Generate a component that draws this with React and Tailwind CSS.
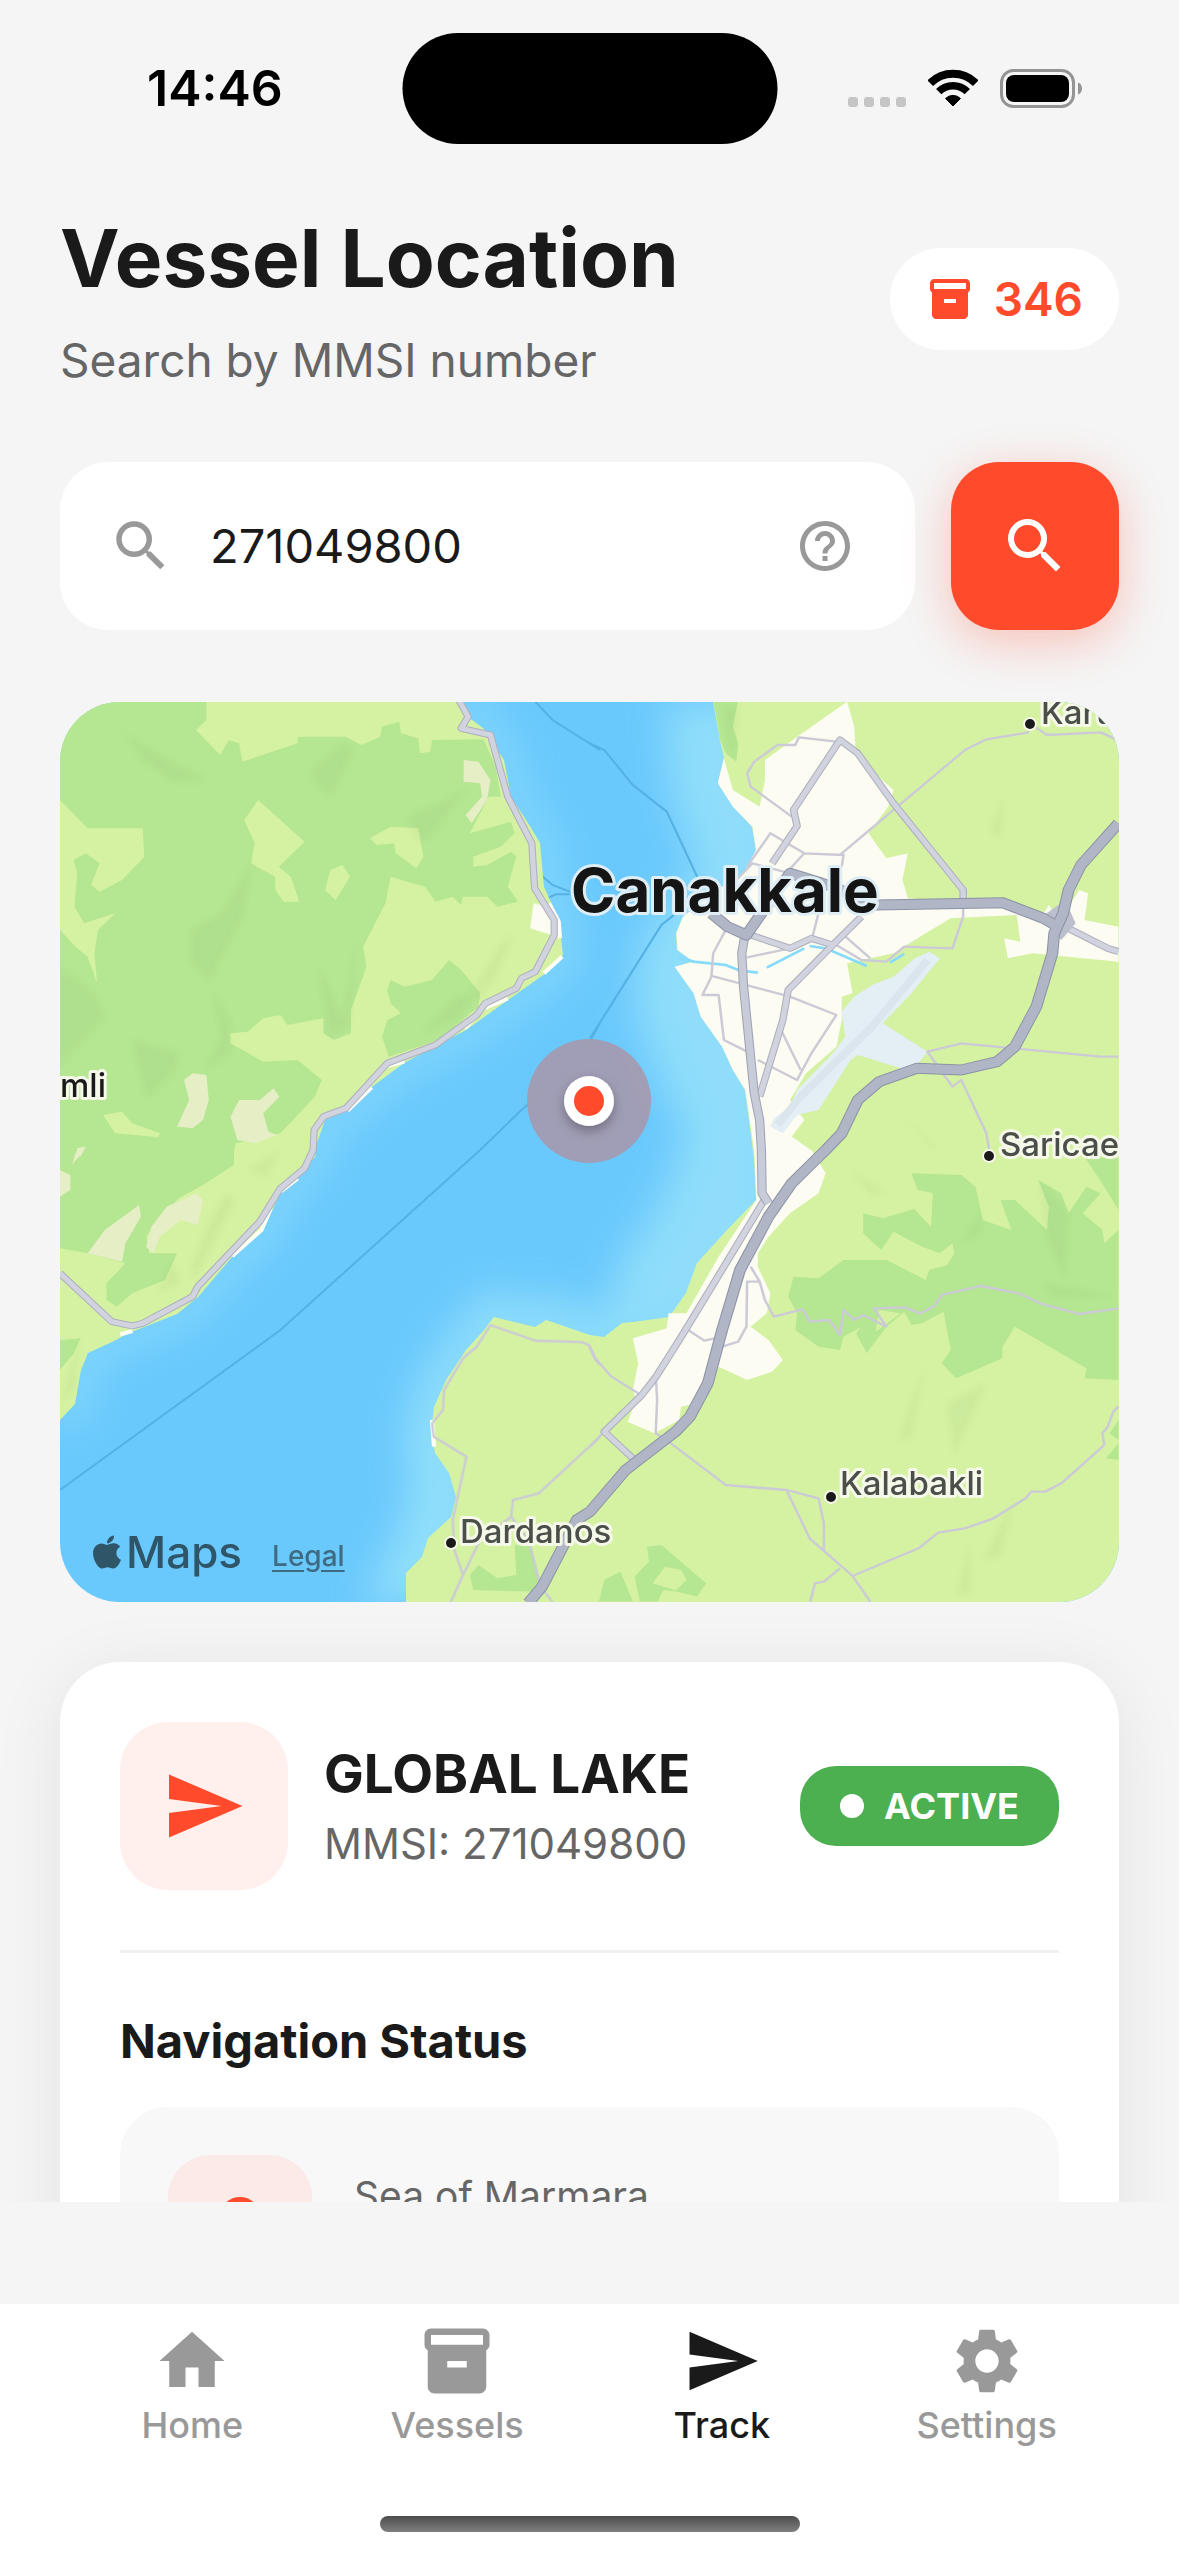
import React from "react";
import {
  MdSearch,
  MdHelpOutline,
  MdHome,
  MdInventory2,
  MdSend,
  MdSettings,
  MdLocationOn,
} from "react-icons/md";
import { FaApple } from "react-icons/fa";

const NW = "translate(0 -2) scale(.3444 .3333)";
const NE = "translate(530 -2) scale(.3571 .3333)";
const SW = "translate(0 448) scale(.3444 .3333)";
const SE = "translate(530 448) scale(.3571 .3333)";

const WEST_COAST =
  "M400 -10L408 15 423 26 444 58 451 95 468 121 480 141 484 185 496 211 501 236 503 253 486 271 448 298 406 328 344 361 313 384 289 407 265 418 257 441 255 455 220 492 203 528 172 555 138 595 117 612 69 631 52 640 28 651 21 668 15 702 0 718";
const EAST_COAST =
  "M653 0L660 38 664 56 658 81 673 104 692 125 696 148 684 172 662 185 623 215 616 231 617 248 634 259 615 265 634 291 641 314 662 344 673 368 685 388 689 418 694 458 696 498 667 528 637 561 626 591 609 615 573 620 562 621 544 635 530 633 486 618 475 625 434 615 424 628 406 648 386 678 374 705 371 731 375 751 389 771 396 795 391 815 368 836 362 855 346 871 346 900";

const places = [
  { name: "Kart", x: 981, y: 22, dot: [970, 22] },
  { name: "Saricae", x: 940, y: 454, dot: [929, 454] },
  { name: "Kalabakli", x: 780, y: 793, dot: [771, 795] },
  { name: "Dardanos", x: 400, y: 841, dot: [391, 841] },
];

function Roads({ width, casing, color, children }) {
  return (
    <>
      <g fill="none" stroke={casing} strokeWidth={width + 6} strokeLinejoin="round">
        {children}
      </g>
      <g fill="none" stroke={color} strokeWidth={width} strokeLinejoin="round">
        {children}
      </g>
    </>
  );
}

function MapArt() {
  return (
    <svg
      viewBox="0 0 1059 900"
      preserveAspectRatio="xMidYMid slice"
      className="block h-full w-full"
      role="img"
      aria-label="Map of Canakkale"
    >
      <defs>
        <filter id="shallow" x="-20%" y="-20%" width="140%" height="140%">
          <feGaussianBlur stdDeviation="18" />
        </filter>
        <filter id="relief" x="-20%" y="-20%" width="140%" height="140%">
          <feGaussianBlur stdDeviation="3" />
        </filter>
        <filter id="pin" x="-50%" y="-50%" width="200%" height="200%">
          <feDropShadow dx="0" dy="5" stdDeviation="6" floodColor="#000" floodOpacity=".3" />
        </filter>
      </defs>

      {/* Water */}
      <rect width="1059" height="900" fill="#6ac9fc" />
      <g filter="url(#shallow)" fill="none">
        <path d={WEST_COAST} stroke="#7fd5fd" strokeWidth="36" />
        <path d={EAST_COAST} stroke="#8cdcfb" strokeWidth="50" />
        <path
          d="M605 0L610 90 640 180 580 240 575 310 600 380 625 430 600 500 560 560 545 620 720 620 720 0z"
          fill="#8fddfb"
        />
        <path d="M380 690L345 730 350 790 330 850 300 900 400 900 400 690z" fill="#90defb" />
      </g>

      {/* Ferry routes */}
      <g fill="none" stroke="#55b1e3" strokeWidth="6">
        <path
          transform={NW}
          d="M1380 5L1430 60 1568 150M1390 520L1430 555 1480 575M1410 597L1440 583 1480 583M1568 970L1510 1075 1340 1230 1220 1350"
        />
        <path transform={SW} d="M1220 0L640 540 0 1020" />
        <path
          transform={NE}
          d="M0 130L40 150 120 255 215 335 300 530M235 645L200 675 0 1015"
        />
      </g>

      {/* Land */}
      <path d={WEST_COAST + "V0z"} fill="#d5f2a2" />
      <path d={EAST_COAST + "H1059V0z"} fill="#d5f2a2" />

      {/* Beaches */}
      <g fill="none" stroke="#fffef5" strokeWidth="12">
        <path
          transform={NW}
          d="M1420 610L1448 665 1452 715M1458 770L1405 820M1300 895L1230 925 1175 985M1000 1085L950 1098M905 1162L835 1232"
        />
        <path transform={SW} d="M690 85L640 125M612 175L585 240 500 318M210 543L175 553M1080 810L1086 890" />
      </g>

      {/* Woodland */}
      <g fill="#b5e692">
        <path
          transform={NW}
          d="M0 0L425 5V60L395 90 465 165 490 120 520 130 530 185 690 130V110H830L875 135 930 110 935 80 985 65 990 100 1040 115 1045 160 1075 155 1080 120 1230 118 1265 200 1280 290 1245 290 1190 400 1310 365 1320 400 1280 440 1200 470V500L1240 495 1310 455 1325 470 1300 560 1330 605 1270 620 1240 590H1170L1165 615 1140 590 1090 605 1060 560 960 530 945 610 880 740 890 800 845 930V1000L795 1020 765 1000V955L660 975 640 945 590 955 545 995 495 1000V1030L590 1085 690 1080 760 1140 740 1190 640 1300 510 1330 505 1352H0z"
        />
        <path
          transform={NW}
          d="M950 870L960 840 1000 860 1080 840 1130 780 1165 810 1220 880 1215 920 1100 1020 955 1070 935 1010 950 960 990 940 960 910z"
        />
        <path
          transform={SW}
          d="M0 0H505V45L415 105 345 145 300 190 250 260 260 310 340 310 305 390 210 430 165 470 135 450V400L190 340 80 310 0 295zM0 570L60 565 40 610 0 660zM1320 1185L1370 1190 1395 1300 1370 1325 1200 1320 1190 1275 1215 1245 1270 1285 1325 1275z"
        />
        <path transform={NE} d="M345 0H415L400 80 415 130 410 185 380 160 365 120z" />
        <path
          transform={SE}
          d="M900 70L1040 75 1080 110 1100 210 1180 240 1150 150 1190 150 1280 240 1285 170 1255 90 1320 130 1340 190 1390 110 1430 130 1380 190 1435 240 1440 280 1480 240V690L1385 685 1390 655 1190 530 1155 590V625L1025 685 985 640 1010 600 990 485 930 520 900 525 880 485 830 530 775 610 745 550 760 530 710 560 700 600 640 590 575 540 580 490 555 440 570 380 640 385 710 330H830L940 390 950 360 1000 345 1020 310 1015 280 980 310 930 290 850 245 815 300 765 250V190L820 205 915 175 955 230zM1385 20L1480 25V180L1440 110zM1480 810L1455 850 1480 870zM1445 925L1480 880V930z"
        />
        <path
          transform={SE}
          fillRule="evenodd"
          d="M160 1190L200 1185 325 1300 300 1340 240 1325 205 1320 190 1355H140L125 1280 165 1235zM210 1250L175 1300 240 1322 270 1290 255 1260zM25 1355L40 1290 85 1265 120 1355z"
        />
      </g>

      {/* Clearings */}
      <g fill="#d5f2a2">
        <path
          transform={NW}
          d="M0 300L80 385H240L245 470 180 540 115 575 90 555 115 490 75 460 40 480 50 520 42 620 70 670 160 640 110 690 100 760 108 850 80 770 45 740 0 690zM575 300L710 425 635 500 670 530 695 605 650 605 625 570V530L555 490 565 430 535 360zM820 495L842 530 800 600 770 570 785 510zM900 415L960 380 1040 385 1055 470 1035 505 975 460 970 430 920 435zM125 1245L180 1235 210 1270 290 1300 285 1312 160 1300z"
        />
        <path transform={SE} d="M960 130L920 120 910 180 955 230zM810 480L870 490 800 545z" />
      </g>
      <g fill="#e6eec6">
        <path
          transform={NW}
          d="M1172 180L1215 185 1250 240 1240 300 1195 370 1178 345 1225 290 1220 250 1172 245zM360 1140L385 1120 425 1125 432 1200 415 1260 385 1285 340 1280 375 1200zM495 1250L520 1200 580 1200 620 1165 637 1190 590 1240 605 1295 630 1305 570 1330 515 1320zM45 1370L50 1345 75 1340 60 1370z"
        />
        <path
          transform={SW}
          d="M230 165L235 200 190 280 180 335 80 310 130 240zM395 130L415 150 400 225 350 210 290 260 270 310 250 290 265 230 310 170zM0 60L30 75V120L0 140zM70 0L35 45 45 10z"
        />
      </g>

      {/* Relief shading */}
      <g filter="url(#relief)" fill="#6e9150" opacity=".07">
        <path
          transform={NW}
          d="M140 20L200 110 330 190 430 240 330 245 240 180zM730 210L820 130 850 150 790 290 740 250zM380 690L470 640 560 480 530 650 430 850 380 780zM750 790L820 960 860 720 840 980 780 1010zM1010 350L1120 300 1190 260 1080 400 1040 430zM440 870L495 960V1060L420 1110 470 1010zM0 800L100 880 130 950 0 1100zM210 1020L350 1060 330 1120 250 1200zM1200 870L1280 730 1320 700 1260 840 1210 900zM1050 1000L1150 890 1210 880 1150 960z"
        />
        <path
          transform={SW}
          d="M480 130L510 150 440 290 390 390 380 350 430 220zM0 760L60 560 40 720zM540 60L640 0 600 80zM280 430L330 330 350 400z"
        />
        <path
          transform={SE}
          d="M1260 90L1340 190 1330 390 1280 260zM1040 280L1100 180 1090 260zM1260 400L1480 440 1300 440zM860 880L940 640 900 860zM1000 760L1110 700 1020 920zM1100 1230L1190 1040 1150 1220zM730 60L830 130 780 130zM1030 1330L1060 1180 1070 1330z"
        />
        <path transform={NE} d="M1120 390L1160 290 1150 420zM870 1240L950 1320 980 1370zM370 20L415 20 400 180z" />
      </g>

      {/* Built-up areas */}
      <g fill="#fcfcf2">
        <path transform={NW} d="M1375 610L1420 620 1446 680 1450 712 1365 685z" />
        <path
          transform={NE}
          d="M720 5L740 80 745 170 850 270 835 320 780 400 830 475 890 460 875 540 890 595 1040 610 1150 600 1270 640 1285 615 1300 640 1340 620 1370 570 1395 580 1385 660 1480 680V785L1380 775 1240 760 1170 775 1160 715 1205 725 1195 645 1010 655 940 700 850 760 720 790 735 880 705 890V960L690 1040 605 1120 560 1200 600 1260 565 1310 620 1352 460 1352 447 1260 435 1170 400 1110 370 1040 310 950 290 880 237 800 290 785 245 750 242 700 260 650 370 560 430 520 465 450 455 380 400 320 358 250 375 175 400 270 475 320 490 240V180L580 110z"
        />
        <path
          transform={SE}
          d="M460 0L620 0 660 70 640 130 560 190 500 260 470 310V350L505 430 495 490 450 530 500 570 540 630 510 665 440 690 360 650 340 700 300 760 255 770 250 810 180 850 105 815 130 750 120 720 135 640 120 565 215 535 220 490H270L360 320 466 150z"
        />
      </g>

      {/* Airfield */}
      <g transform={NE}>
        <path
          fill="#e3eef5"
          d="M950 755L980 775 900 880 820 970 945 1055 920 1090 870 1105 750 1065 730 1080 670 1180 640 1230 580 1245 540 1300 505 1280 515 1255 560 1220 580 1170 680 1060 715 1010 705 935 740 890 790 855 850 830 910 775z"
        />
        <path d="M945 780L790 980 590 1190 525 1275" fill="none" stroke="#dae5ed" strokeWidth="22" />
      </g>

      {/* River */}
      <path
        transform={NE}
        fill="none"
        stroke="#86dbfb"
        strokeWidth="8"
        d="M245 772L290 785 380 795 420 812 470 818M495 803L600 745M615 738L660 745 775 798M840 788L880 762"
      />

      {/* Minor roads */}
      <g fill="none" stroke="#cbcad6" strokeWidth="7" strokeLinejoin="round">
        <path
          transform={NE}
          d="M565 350L450 260 440 220 460 185 525 135 575 135 585 112 690 125M700 465L850 330 1050 150 1110 118 1225 98 1233 80M1245 80L1280 105 1430 97 1468 115 1480 130M440 500L505 400 600 460 710 465 705 500M410 540L455 490 560 520M540 530L600 460M380 690L345 760 340 830 315 885 360 885 375 1020 440 1055M340 828L560 890 690 945 620 1060 580 1140 470 1080M535 990L590 1110M710 705L785 775M690 735L760 780 830 785 880 740 1015 745 1045 650V620M640 640L622 715M1480 1070L1430 1070 1040 1030 945 1055 1015 1160 1040 1140 1110 1300 1118 1350M440 772L560 745"
        />
        <path
          transform={SE}
          d="M40 845L0 890M0 590L15 625 60 680 135 730M185 690L188 750 184 850 220 875 380 1005 550 1020 640 1045 655 1120V1205M550 1020L615 1165 735 1278 785 1355M735 1278L920 1195 975 1148 1050 1135 1130 1105 1220 1045 1235 1025 1275 1025 1320 1000 1440 885 1435 850 1450 830 1465 785 1480 770M700 1255L655 1295 630 1300 617 1355M450 350L475 395 490 450 515 500 595 478 615 515 670 510 700 555 710 480 740 510 765 495 830 530 795 475 880 472 925 490 965 468 985 435 1095 408 1200 430 1260 460 1370 492 1480 475M475 395H440L438 530 415 575 370 590 350 565 320 572 275 540"
        />
        <path
          transform={SW}
          d="M1568 645L1552 625 1535 585 1515 576 1380 572 1250 525 1210 590 1170 625 1115 720 1112 780 1080 820 1085 860 1180 920 1140 1110 1145 1200 1170 1275 1220 1170 1310 1100 1315 1050 1390 1030 1568 860M1170 1275L1135 1355M1310 1100L1360 1170 1395 1310 1430 1355"
        />
      </g>

      {/* Secondary roads */}
      <Roads width={15} casing="#aeafbf" color="#d1d3df">
        <path
          transform={NW}
          d="M1158 0L1185 50 1165 85 1250 105 1300 290 1370 430 1378 565 1435 660V705L1380 815 1340 835 1325 865 1235 910 1210 945 1090 1035 950 1090 830 1225 765 1250 738 1290 735 1350 710 1405 640 1465 580 1565 400 1760 385 1790 240 1870 210 1878 150 1865 0 1720"
        />
        <path
          transform={NE}
          d="M510 490L580 378 570 330 700 120 750 160 850 310 1045 570V600M450 705L560 745 620 715 680 735 760 650M680 735L555 870 540 960 475 1190M1330 680L1450 745 1480 755"
        />
        <path transform={SE} d="M488 150L330 430 250 570 185 680 145 735 40 845 125 930" />
      </Roads>
      <Roads width={20} casing="#a2a4b6" color="#c8cbd8">
        <path transform={NE} d="M435 700L425 760 430 860 460 1180 475 1260 480 1350 482 1480 500 1510" />
      </Roads>

      {/* Highways */}
      <path transform={NE} d="M1260 655L1330 600 1360 670 1320 720z" fill="#bcc0cd" />
      <Roads width={27} casing="#8d93a8" color="#b0b6c5">
        <path transform={NE} d="M340 640L385 680 438 705 490 625 560 520 680 560 800 615 1155 608 1270 655 1310 680" />
        <path
          transform={NE}
          d="M1480 370L1375 495 1340 570 1325 640 1300 700 1295 760 1250 920 1190 1040 1140 1085 1040 1110 915 1105 810 1145 750 1200 705 1300 660 1350 565 1450 500 1550 420 1710 370 1890 330 2050 280 2150 240 2195 100 2310 0 2435 -37 2460 -134 2660 -173 2710"
        />
      </Roads>

      {/* Labels */}
      <g
        className="font-['Inter']"
        stroke="#f6f8ea"
        strokeLinejoin="round"
        strokeWidth="6"
        paintOrder="stroke"
      >
        {places.map((p) => (
          <g key={p.name}>
            <circle cx={p.dot[0]} cy={p.dot[1]} r="5" fill="#1a1a1a" strokeWidth="4" />
            <text x={p.x} y={p.y} fontSize="33" fontWeight="500" fill="#4b4f4a">
              {p.name}
            </text>
          </g>
        ))}
        <text x="46" y="395" textAnchor="end" fontSize="33" fontWeight="500" fill="#1a1a1a">
          mli
        </text>
        <text x="511" y="210" fontSize="60" fontWeight="700" fill="#151515" stroke="#dfeef5">
          Canakkale
        </text>
      </g>

      {/* Vessel position */}
      <circle cx="529" cy="399" r="62" fill="#a59ab0" fillOpacity=".93" />
      <circle cx="529" cy="399" r="25" fill="#fff" filter="url(#pin)" />
      <circle cx="529" cy="399" r="15" fill="#ff4a2b" />
    </svg>
  );
}

function StatusBar() {
  return (
    <header className="relative flex h-44 shrink-0 items-center justify-between pr-24 pl-[147px] text-black">
      <time className="text-[50px] font-semibold">14:46</time>
      <div className="absolute top-[33px] left-1/2 h-[111px] w-[375px] -translate-x-1/2 rounded-full bg-black" />
      <div className="flex items-center gap-[22px]">
        <div className="flex gap-1.5 pt-7">
          <span className="size-2.5 rounded-[3px] bg-[#c5c5c5]" />
          <span className="size-2.5 rounded-[3px] bg-[#c5c5c5]" />
          <span className="size-2.5 rounded-[3px] bg-[#c5c5c5]" />
          <span className="size-2.5 rounded-[3px] bg-[#c5c5c5]" />
        </div>
        <svg viewBox="0 0 50 38" className="h-[38px] w-[50px]" fill="none" stroke="currentColor" aria-label="Wi-Fi">
          <path d="M2.200 14.200a32.300 32.300 0 0 1 45.600 0" strokeWidth="8" />
          <path d="M10.700 22.700a20.200 20.200 0 0 1 28.600 0" strokeWidth="7.500" />
          <path d="M17.500 29.500a10.600 10.600 0 0 1 15 0L25 37z" fill="currentColor" strokeWidth="1" strokeLinejoin="round" />
        </svg>
        <svg viewBox="0 0 83 39" className="h-[39px] w-[83px]" aria-label="Battery full">
          <rect x="1.500" y="1.500" width="72" height="36" rx="12" fill="none" stroke="#949494" strokeWidth="3" />
          <rect x="6" y="6" width="63" height="27" rx="8" fill="#000" />
          <path d="M78 13.500c3 1 4 3.500 4 6s-1 5-4 6z" fill="#949494" />
        </svg>
      </div>
    </header>
  );
}

const tabs = [
  { label: "Home", icon: MdHome },
  { label: "Vessels", icon: MdInventory2 },
  { label: "Track", icon: MdSend, active: true },
  { label: "Settings", icon: MdSettings },
];

function TabBar() {
  return (
    <nav className="shrink-0 bg-white pb-6">
      <ul className="flex px-[60px] pt-[18px]">
        {tabs.map(({ label, icon: Icon, active }) => (
          <li key={label} className="flex-1">
            <a
              href={"#" + label.toLowerCase()}
              aria-current={active ? "page" : undefined}
              className={
                active
                  ? "flex flex-col items-center font-medium text-[#1a1a1a]"
                  : "flex flex-col items-center font-medium text-[#999999]"
              }
            >
              <Icon className="size-[78px]" />
              <span className="text-[36px] leading-[50px]">{label}</span>
            </a>
          </li>
        ))}
      </ul>
      <div className="mx-auto mt-[66px] h-4 w-[420px] rounded-full bg-linear-to-b from-[#4d4d4d] to-[#808080]" />
    </nav>
  );
}

export default function App() {
  return (
    <div className="flex h-screen flex-col bg-[#f5f5f5] font-['Inter',sans-serif] text-[#1a1a1a]">
      <StatusBar />
      <main className="min-h-0 flex-1 overflow-hidden px-[60px] pt-8">
        <div className="flex items-center justify-between">
          <div>
            <h1 className="text-[80px] leading-[100px] font-bold">Vessel Location</h1>
            <p className="mt-[22px] text-[46px] leading-[60px] text-[#666666]">Search by MMSI number</p>
          </div>
          <div className="flex h-[102px] items-center gap-5 rounded-full bg-white px-9 text-[#ff4a2b]">
            <MdInventory2 className="size-12" />
            <span className="text-[46px] font-semibold">346</span>
          </div>
        </div>

        <form className="mt-[72px] flex gap-9" onSubmit={(e) => e.preventDefault()}>
          <div className="flex h-[168px] min-w-0 flex-1 items-center rounded-[48px] bg-white pr-[60px] pl-12">
            <MdSearch className="size-[66px] shrink-0 text-[#999999]" />
            <input
              type="text"
              inputMode="numeric"
              aria-label="MMSI number"
              defaultValue="271049800"
              className="ml-9 min-w-0 flex-1 bg-transparent text-[47px] outline-none"
            />
            <button type="button" aria-label="Help" className="shrink-0 text-[#999999]">
              <MdHelpOutline className="size-[60px]" />
            </button>
          </div>
          <button
            type="submit"
            aria-label="Search"
            className="flex size-[168px] shrink-0 items-center justify-center rounded-[48px] bg-[#ff4a2b] text-white shadow-[0_12px_48px_rgba(255,74,43,0.3)]"
          >
            <MdSearch className="size-[72px]" />
          </button>
        </form>

        <section className="relative mt-[72px] h-[900px] overflow-hidden rounded-[60px]">
          <MapArt />
          <div className="absolute bottom-5 left-7 flex items-center gap-[30px] text-[#2f5568]">
            <div className="flex items-center">
              <FaApple className="size-[38px]" />
              <span className="text-[44px] leading-[60px] font-medium">Maps</span>
            </div>
            <a href="#legal" className="pt-2 text-[28px] font-medium text-[#3f6b82] underline underline-offset-4">
              Legal
            </a>
          </div>
        </section>

        <section className="mt-[60px] rounded-[60px] bg-white p-[60px] shadow-[0_12px_72px_rgba(0,0,0,0.08)]">
          <div className="flex items-center gap-9 border-b-3 border-[#f0f0f0] pb-[60px]">
            <div className="flex size-[168px] shrink-0 items-center justify-center rounded-[48px] bg-[#ffefed] text-[#ff4a2b]">
              <MdSend className="size-[84px]" />
            </div>
            <div className="flex-1 pt-1">
              <h2 className="text-[53px] leading-[64px] font-bold">GLOBAL LAKE</h2>
              <p className="mt-2 text-[42px] leading-[60px] text-[#666666]">MMSI: 271049800</p>
            </div>
            <div className="flex h-20 items-center gap-5 rounded-[36px] bg-[#4caf50] px-10 text-white">
              <span className="size-6 rounded-full bg-white" />
              <span className="text-[36px] font-bold">ACTIVE</span>
            </div>
          </div>

          <h3 className="mt-[58px] text-[47px] leading-[60px] font-bold">Navigation Status</h3>
          <div className="mt-9 flex gap-[42px] rounded-[48px] bg-[#f8f8f8] p-12">
            <div className="flex size-36 shrink-0 items-center justify-center rounded-[42px] bg-[#fbeae7] text-[#ff4a2b]">
              <MdLocationOn className="size-[72px]" />
            </div>
            <p className="mt-3.5 text-[39px] leading-[54px] text-[#666666]">Sea of Marmara</p>
          </div>
        </section>
      </main>
      <div className="h-[102px] shrink-0" />
      <TabBar />
    </div>
  );
}
